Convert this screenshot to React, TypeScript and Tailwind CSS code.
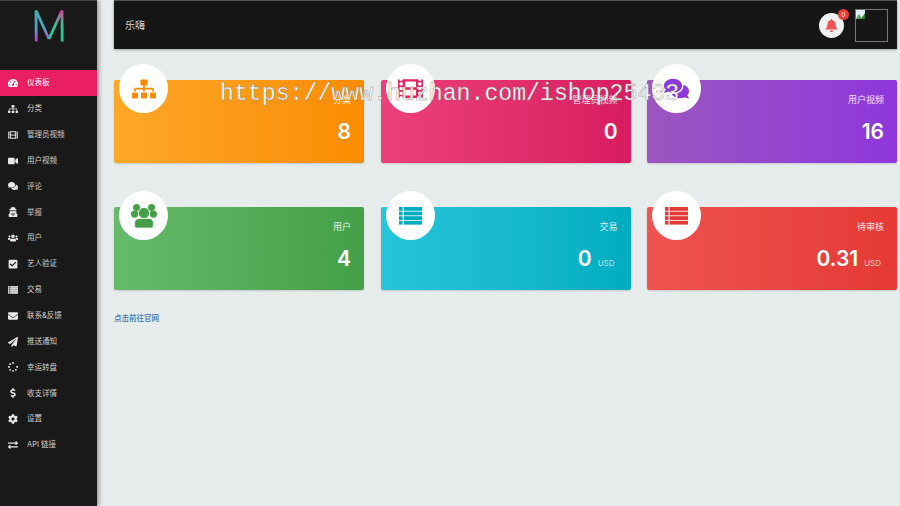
import {
  FaBell,
  FaCheckSquare,
  FaCog,
  FaComments,
  FaDollarSign,
  FaEnvelope,
  FaExchangeAlt,
  FaFilm,
  FaPaperPlane,
  FaSitemap,
  FaTachometerAlt,
  FaUsers,
  FaVideo,
  FaUserSecret,
  FaSpinner,
} from 'react-icons/fa'

function ListIcon({ className }: { className?: string }) {
  // four rows with a narrow bullet column
  const rows = [0, 4.6, 9.2, 13.8]
  return (
    <svg viewBox="0 0 23 18" fill="currentColor" className={className}>
      {rows.map((y) => (
        <g key={y}>
          <rect x="0" y={y} width="3.6" height="3.8" />
          <rect x="4.8" y={y} width="18.2" height="3.8" />
        </g>
      ))}
    </svg>
  )
}

function GroupIcon({ className }: { className?: string }) {
  return (
    <svg viewBox="0 0 26 24" fill="currentColor" className={className}>
      <circle cx="5.5" cy="3.6" r="3.5" />
      <circle cx="20.5" cy="3.6" r="3.5" />
      <path d="M3.6 6.5 A3.6 3.6 0 1 0 3.6 13.7 A3.6 3.6 0 1 0 3.6 6.5 Z" />
      <path d="M22.4 6.5 A3.6 3.6 0 1 0 22.4 13.7 A3.6 3.6 0 1 0 22.4 6.5 Z" />
      <circle cx="13" cy="9" r="5.6" stroke="#fff" strokeWidth="0.7" />
      <path
        d="M5.5 24 Q3.6 24 3.6 22 V19 Q3.6 14.4 8.6 14.4 H17.4 Q22.4 14.4 22.4 19 V22 Q22.4 24 20.5 24 Z"
        stroke="#fff"
        strokeWidth="0.7"
      />
    </svg>
  )
}

const navItems = [
  { label: '仪表板', icon: FaTachometerAlt, active: true },
  { label: '分类', icon: FaSitemap },
  { label: '管理员视频', icon: FaFilm },
  { label: '用户视频', icon: FaVideo },
  { label: '评论', icon: FaComments },
  { label: '举报', icon: FaUserSecret },
  { label: '用户', icon: FaUsers },
  { label: '艺人验证', icon: FaCheckSquare },
  { label: '交易', icon: ListIcon },
  { label: '联系&反馈', icon: FaEnvelope },
  { label: '推送通知', icon: FaPaperPlane },
  { label: '幸运转盘', icon: FaSpinner },
  { label: '收支详情', icon: FaDollarSign },
  { label: '设置', icon: FaCog },
  { label: 'API 链接', icon: FaExchangeAlt },
]

const cards = [
  { label: '分类', value: '8', icon: FaSitemap, size: 'h-[24px] w-[24px]', bg: 'from-[#ffa726] to-[#fb8c00]', fg: 'text-[#fb8c00]' },
  { label: '管理员视频', value: '0', icon: FaFilm, size: 'h-[25px] w-[25px]', bg: 'from-[#ec407a] to-[#d81b60]', fg: 'text-[#e0265f]' },
  { label: '用户视频', value: '16', icon: FaComments, size: 'h-[25px] w-[25px]', bg: 'from-[#9c55c0] to-[#8e35dc]', fg: 'text-[#8e35dc]' },
  { label: '用户', value: '4', icon: GroupIcon, size: 'h-[24px] w-[26px]', bg: 'from-[#66bb6a] to-[#43a047]', fg: 'text-[#43a047]' },
  { label: '交易', value: '0', unit: 'USD', icon: ListIcon, size: 'h-[18px] w-[23px]', bg: 'from-[#26c6da] to-[#00acc1]', fg: 'text-[#00acc1]' },
  { label: '待审核', value: '0.31', unit: 'USD', icon: ListIcon, size: 'h-[18px] w-[23px]', bg: 'from-[#ef5350] to-[#e53935]', fg: 'text-[#e53935]' },
]

const cjk = "font-['Inter','Noto_Sans_CJK_SC',sans-serif]"

function Logo() {
  return (
    <svg width="32" height="34" viewBox="0 0 32 34" fill="none" strokeWidth="2.8" strokeLinejoin="bevel">
      <defs>
        <linearGradient id="mLeft" gradientUnits="userSpaceOnUse" x1="0" y1="33" x2="0" y2="1">
          <stop offset="0" stopColor="#c93ad8" />
          <stop offset="0.45" stopColor="#4fa5c0" />
          <stop offset="1" stopColor="#3fb0b4" />
        </linearGradient>
        <linearGradient id="mRight" gradientUnits="userSpaceOnUse" x1="0" y1="1" x2="0" y2="33">
          <stop offset="0" stopColor="#dc3a98" />
          <stop offset="0.5" stopColor="#35c89a" />
          <stop offset="1" stopColor="#1fcc8a" />
        </linearGradient>
      </defs>
      <path d="M3.2 32.5 L3 1.5 L16 30" stroke="url(#mLeft)" />
      <path d="M16 30 L29 1.5 L29.2 32.5" stroke="url(#mRight)" />
    </svg>
  )
}

function BrokenImage() {
  return (
    <svg width="9" height="9" viewBox="0 0 9 9" className="absolute left-0 top-0">
      <rect width="9" height="9" fill="#e4ecf7" />
      <path d="M0 9 L3 4 L6 9 Z" fill="#4ea24e" />
      <path d="M5 9 L9 3 L9 9 Z" fill="#2f7d2f" />
    </svg>
  )
}

export default function App() {
  return (
    <div className={`relative flex h-[506px] w-[900px] overflow-hidden bg-[#e6ebeb] ${cjk}`}>
      {/* Sidebar */}
      <aside className="flex h-full w-[97px] shrink-0 flex-col border-t border-[#444] bg-[#191919] shadow-[2px_0_4px_rgba(0,0,0,0.35)]">
        <div className="flex h-[69px] shrink-0 justify-center pt-[8px]">
          <Logo />
        </div>
        <nav className="flex flex-col">
          {navItems.map((item) => (
            <div
              key={item.label}
              className={`flex h-[25.86px] items-center pl-[8px] text-[7.5px] ${
                item.active ? 'bg-[#e91e63] text-white' : 'text-[#d0d0d0]'
              }`}
            >
              <span className="flex w-[19px] shrink-0">
                <item.icon className={`h-[10px] w-[10px] ${item.active ? 'text-white' : 'text-[#e8e8e8]'}`} />
              </span>
              {item.label}
            </div>
          ))}
        </nav>
      </aside>

      {/* Main */}
      <main className="flex min-w-0 flex-1 flex-col pl-[17px] pr-[3px]">
        <header className="flex h-[49px] shrink-0 items-center justify-between border-t border-[#555] bg-[#161616] pl-[11px] pr-[9px] shadow-[0_1px_3px_rgba(0,0,0,0.3)]">
          <span className="text-[10px] text-[#dddddd]">乐嗨</span>
          <div className="flex items-center gap-[11px]">
            <div className="relative flex h-[25px] w-[25px] items-center justify-center rounded-full bg-[#f1f1f1]">
              <FaBell className="text-[13px] text-[#ef5350]" />
              <span className="absolute right-[-5px] top-[-4px] flex h-[11px] w-[11px] items-center justify-center rounded-full bg-[#ef3b36] text-[6px] text-white">
                0
              </span>
            </div>
            <div className="relative h-[33px] w-[33px] border border-[#777]">
              <BrokenImage />
            </div>
          </div>
        </header>

        <div className="mt-[31px] grid grid-cols-3 gap-x-[16.5px] gap-y-[44px]">
          {cards.map((card) => (
            <div
              key={card.label}
              className={`relative flex h-[83px] flex-col items-end rounded-[2px] bg-gradient-to-r ${card.bg} pr-[13px] pt-[13px] text-white shadow-[0_1px_2px_rgba(0,0,0,0.15)]`}
            >
              <div className="absolute left-[5px] top-[-16px] flex h-[49px] w-[49px] items-center justify-center rounded-full bg-white">
                <card.icon className={`${card.size} ${card.fg}`} />
              </div>
              <span className="text-[9px] leading-[13px] text-white/85">{card.label}</span>
              <div className="mt-[11px] flex items-baseline">
                <span className="text-[21px] font-semibold leading-[30px]">{card.value}</span>
                {card.unit && <span className="ml-[6px] mr-[3px] text-[8px] text-white/70">{card.unit}</span>}
              </div>
            </div>
          ))}
        </div>

        <a className="mt-[23px] text-[7.5px] font-medium text-[#3c78b4]">点击前往官网</a>
      </main>

      {/* Site watermark over the page */}
      <div className="absolute left-[220px] top-[79px] whitespace-nowrap font-['Liberation_Mono',monospace] text-[23.2px] leading-[30px] text-white [-webkit-text-stroke:0.4px_#888]">
        https://www.huzhan.com/ishop25433
      </div>
    </div>
  )
}
